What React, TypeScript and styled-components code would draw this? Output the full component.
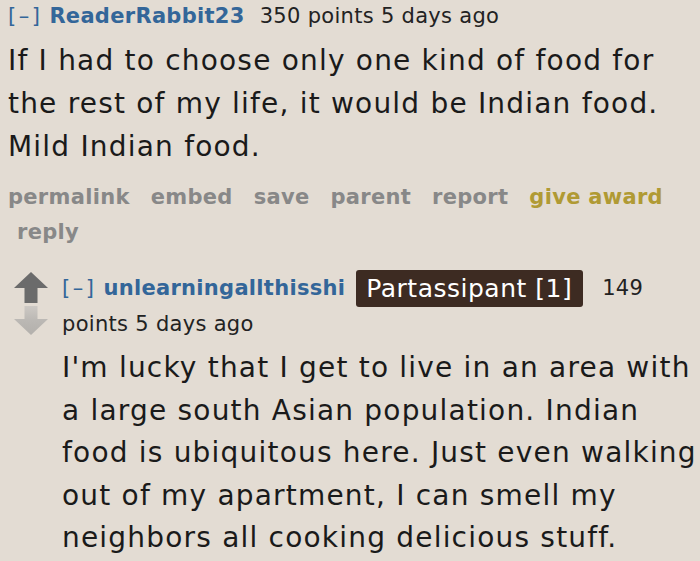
import React from "react";
import styled, { createGlobalStyle } from "styled-components";

const Global = createGlobalStyle`
  html, body { margin: 0; padding: 0; background: #e3dcd3; overflow: hidden; }
  body { font-family: "DejaVu Sans", Verdana, sans-serif; color: #222; }
`;

const Page = styled.div`
  width: 706px;
  height: 561px;
  overflow: hidden;
  background: #e3dcd3;
  padding: 0 0 0 8px;
  box-sizing: border-box;
`;

const Tagline = styled.div<{ $lh: number }>`
  font-size: 21px;
  line-height: ${(p) => p.$lh}px;
  letter-spacing: 0.3px;
  color: #222;
`;

const Expand = styled.span`
  color: #369;
  letter-spacing: 2.5px;
  margin-right: 7px;
`;

const Author = styled.span<{ $gap: number }>`
  color: #369;
  font-weight: bold;
  margin-right: ${(p) => p.$gap}px;
`;

const Flair = styled.span`
  display: inline-block;
  background: #3d2b22;
  color: #fff;
  font-size: 25px;
  line-height: 37px;
  letter-spacing: 0.5px;
  padding: 0 11px 0 10px;
  border-radius: 3px;
  margin-right: 19px;
  vertical-align: middle;
`;

const Body = styled.div<{ $lh: number; $top: number }>`
  font-size: 28px;
  line-height: ${(p) => p.$lh}px;
  letter-spacing: 1.2px;
  margin-top: ${(p) => p.$top}px;
  color: #1a1a1a;
`;

const Actions = styled.ul`
  list-style: none;
  margin: 12px 0 0;
  padding: 0;
  display: flex;
  flex-wrap: wrap;
  column-gap: 12px;
  font-size: 21px;
  line-height: 35px;
  letter-spacing: 0.3px;
  font-weight: bold;
`;

const Action = styled.li<{ $gold?: boolean; $first?: boolean }>`
  padding-left: ${(p) => (p.$first ? 0 : 9)}px;
  color: ${(p) => (p.$gold ? "#b09a34" : "#888")};
`;

const Child = styled.div`
  display: flex;
  margin-top: 20px;
  margin-left: 6px;
`;

const Arrows = styled.div`
  width: 34px;
  display: flex;
  flex-direction: column;
  align-items: center;
  gap: 3px;
  padding-top: 2px;
  margin-right: 14px;
`;

const ChildContent = styled.div`
  flex: 1;
  min-width: 0;
`;

const UpArrow = () => (
  <svg width="34" height="31" viewBox="0 0 34 31">
    <path d="M17 0 L34 16 L23.5 16 L23.5 31 L10.5 31 L10.5 16 L0 16 Z" fill="#6b6b6b" />
  </svg>
);

const DownArrow = () => (
  <svg width="34" height="29" viewBox="0 0 34 29">
    <defs>
      <linearGradient id="dg" x1="0" y1="0" x2="0" y2="1">
        <stop offset="0" stopColor="#cdc9c4" />
        <stop offset="0.5" stopColor="#bbb8b4" />
        <stop offset="1" stopColor="#b3b0ac" />
      </linearGradient>
    </defs>
    <path d="M10.5 0 L23.5 0 L23.5 13 L34 13 L17 29 L0 13 L10.5 13 Z" fill="url(#dg)" />
  </svg>
);

export default function App() {
  return (
    <Page>
      <Global />
      <Tagline $lh={32}>
        <Expand>[–]</Expand>
        <Author $gap={15}>ReaderRabbit23</Author>
        350 points 5 days ago
      </Tagline>
      <Body $lh={43} $top={7}>
        If I had to choose only one kind of food for the rest of my life, it would be Indian food. Mild Indian food.
      </Body>
      <Actions>
        <Action $first>permalink</Action>
        <Action>embed</Action>
        <Action>save</Action>
        <Action>parent</Action>
        <Action>report</Action>
        <Action $gold>give award</Action>
        <Action>reply</Action>
      </Actions>
      <Child>
        <Arrows>
          <UpArrow />
          <DownArrow />
        </Arrows>
        <ChildContent>
          <Tagline $lh={34}>
            <Expand>[–]</Expand>
            <Author $gap={11}>unlearningallthisshi</Author>
            <Flair>Partassipant [1]</Flair>149 points 5 days ago
          </Tagline>
          <Body $lh={42.5} $top={6}>
            I'm lucky that I get to live in an area with a large south Asian population. Indian food is ubiquitous here. Just even walking out of my apartment, I can smell my neighbors all cooking delicious stuff.
          </Body>
        </ChildContent>
      </Child>
    </Page>
  );
}
